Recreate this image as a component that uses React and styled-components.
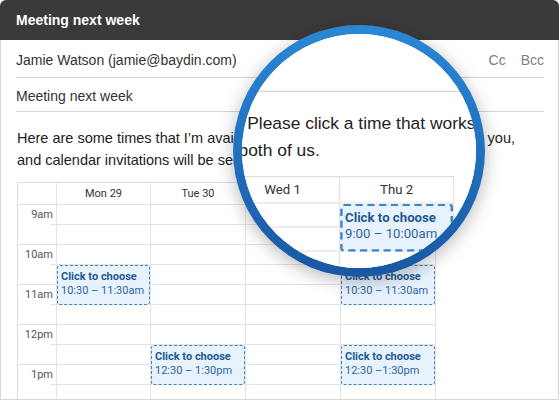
import styled, { createGlobalStyle } from "styled-components";

const GlobalStyle = createGlobalStyle`
  html, body {
    margin: 0;
    padding: 0;
    background: #fff;
  }
  body {
    font-family: "Liberation Sans", Arial, sans-serif;
  }
`;

const Window = styled.div`
  position: relative;
  width: 559px;
  height: 400px;
  border-radius: 6px 6px 0 0;
  overflow: hidden;
  background: #fff;
`;

const TitleBar = styled.div`
  height: 40px;
  display: flex;
  align-items: center;
  padding-left: 16px;
  background: #3a3a3a;
  color: #fff;
  font-size: 14px;
  font-weight: 700;
`;

const Sheet = styled.div`
  height: 360px;
  box-sizing: border-box;
  border: 1px solid ${(p) => (p.$zoomed ? "transparent" : "#d6d6d6")};
  border-top: none;
  overflow: hidden;
  background: #fff;
`;

const FieldRow = styled.div`
  display: flex;
  align-items: center;
  height: ${(p) => p.$height}px;
  box-sizing: border-box;
  padding-top: ${(p) => p.$offset}px;
  margin: 0 14px 0 15px;
  border-bottom: 1px solid ${(p) => (p.$hideRule ? "transparent" : "#d3d3d3")};
  font-size: 14px;
  color: #333;
`;

const FieldActions = styled.div`
  display: flex;
  gap: 15px;
  margin-left: auto;
  color: #808080;
`;

const Body = styled.div`
  padding: 15px 16px 0;
`;

const Message = styled.p`
  margin: 0 0 0 ${(p) => (p.$zoomed ? -9 : 0)}px;
  font-size: 14.5px;
  line-height: 22px;
  color: #222;
`;

const Calendar = styled.div`
  display: flex;
  width: fit-content;
  margin-top: 11px;
  border-top: 1px solid #dedede;
  border-left: 1px solid #dedede;
  font-family: Roboto, "Liberation Sans", sans-serif;
  font-size: 11px;
`;

const Column = styled.div`
  position: relative;
  width: ${(p) => p.$width}px;
  box-sizing: border-box;
  border-right: 1px solid #e3e3e3;
`;

const HeaderCell = styled.div`
  height: 22px;
  box-sizing: border-box;
  display: flex;
  align-items: center;
  justify-content: center;
  border-bottom: 1px solid #e3e3e3;
  color: #333;
`;

const HourCell = styled.div`
  position: relative;
  height: 40px;
  box-sizing: border-box;
  padding-right: 3px;
  border-bottom: 1px solid #e3e3e3;
  text-align: right;
  line-height: 20px;
  color: #555;

  &::after {
    content: "";
    position: absolute;
    left: 32px;
    right: 0;
    top: 19px;
    height: 1px;
    background: #e3e3e3;
  }
`;

const Slot = styled.div`
  height: 20px;
  box-sizing: border-box;
  border-bottom: 1px solid #e3e3e3;
`;

const Event = styled.div`
  position: absolute;
  left: 0;
  right: 0;
  top: ${(p) => 22 + p.$slot * 20}px;
  height: 40px;
  box-sizing: border-box;
  padding: ${(p) => (p.$zoomed ? "3px 2px" : "4px 3px")};
  border: ${(p) => (p.$zoomed ? 2 : 1)}px dashed #3d84c6;
  border-radius: 3px;
  background: #e7f2fd;
  line-height: 14px;
  color: #2f679c;
  white-space: nowrap;
`;

const EventTitle = styled.div`
  font-weight: 700;
  color: #1e5a93;
`;

const LensRing = styled.div`
  position: absolute;
  left: 233px;
  top: 25px;
  width: 252px;
  height: 252px;
  box-sizing: border-box;
  padding: 9px;
  border-radius: 50%;
  background: linear-gradient(180deg, #2b87d4 0%, #2173c2 45%, #1a57a2 100%);
  box-shadow: 0 4px 18px rgba(0, 0, 0, 0.28);
  z-index: 5;
`;

const LensGlass = styled.div`
  position: relative;
  width: 100%;
  height: 100%;
  border-radius: 50%;
  overflow: hidden;
  background: #fff;
`;

const LensCanvas = styled.div`
  position: absolute;
  left: -242px;
  top: -34px;
  width: 559px;
  padding-top: 40px;
  transform: scale(1.2);
  transform-origin: 345px 212px;
  pointer-events: none;
`;

const hours = ["9am", "10am", "11am", "12pm", "1pm"];

const days = [
  { label: "Mon 29", width: 94, events: [{ slot: 3, time: "10:30 – 11:30am" }] },
  { label: "Tue 30", width: 95, events: [{ slot: 7, time: "12:30 – 1:30pm" }] },
  { label: "Wed 1", width: 95, events: [] },
  {
    label: "Thu 2",
    width: 95,
    events: [
      { slot: 0, time: "9:00 – 10:00am" },
      { slot: 3, time: "10:30 – 11:30am" },
      { slot: 7, time: "12:30 –1:30pm" },
    ],
  },
];

const Compose = ({ zoomed }) => (
  <Sheet $zoomed={zoomed}>
    <FieldRow $height={38} $offset={3} $hideRule={zoomed}>
      Jamie Watson (jamie@baydin.com)
      <FieldActions>
        <span>Cc</span>
        <span>Bcc</span>
      </FieldActions>
    </FieldRow>
    <FieldRow $height={34} $offset={2}>
      Meeting next week
    </FieldRow>
    <Body>
      <Message $zoomed={zoomed}>
        Here are some times that I’m available. Please click a time that works for you,
        <br />
        and calendar invitations will be sent to both of us.
      </Message>
      <Calendar>
        <Column $width={39}>
          <HeaderCell />
          {hours.map((h) => (
            <HourCell key={h}>{h}</HourCell>
          ))}
        </Column>
        {days.map((day) => (
          <Column key={day.label} $width={day.width}>
            <HeaderCell>{day.label}</HeaderCell>
            {Array.from({ length: 10 }).map((_, i) => (
              <Slot key={i} />
            ))}
            {day.events.map((ev) => (
              <Event key={ev.slot} $slot={ev.slot} $zoomed={zoomed}>
                <EventTitle>Click to choose</EventTitle>
                {ev.time}
              </Event>
            ))}
          </Column>
        ))}
      </Calendar>
    </Body>
  </Sheet>
);

const App = () => {
  return (
    <>
      <GlobalStyle />
      <Window>
        <TitleBar>Meeting next week</TitleBar>
        <Compose />
        <LensRing>
          <LensGlass>
            <LensCanvas>
              <Compose zoomed />
            </LensCanvas>
          </LensGlass>
        </LensRing>
      </Window>
    </>
  );
};

export default App;
